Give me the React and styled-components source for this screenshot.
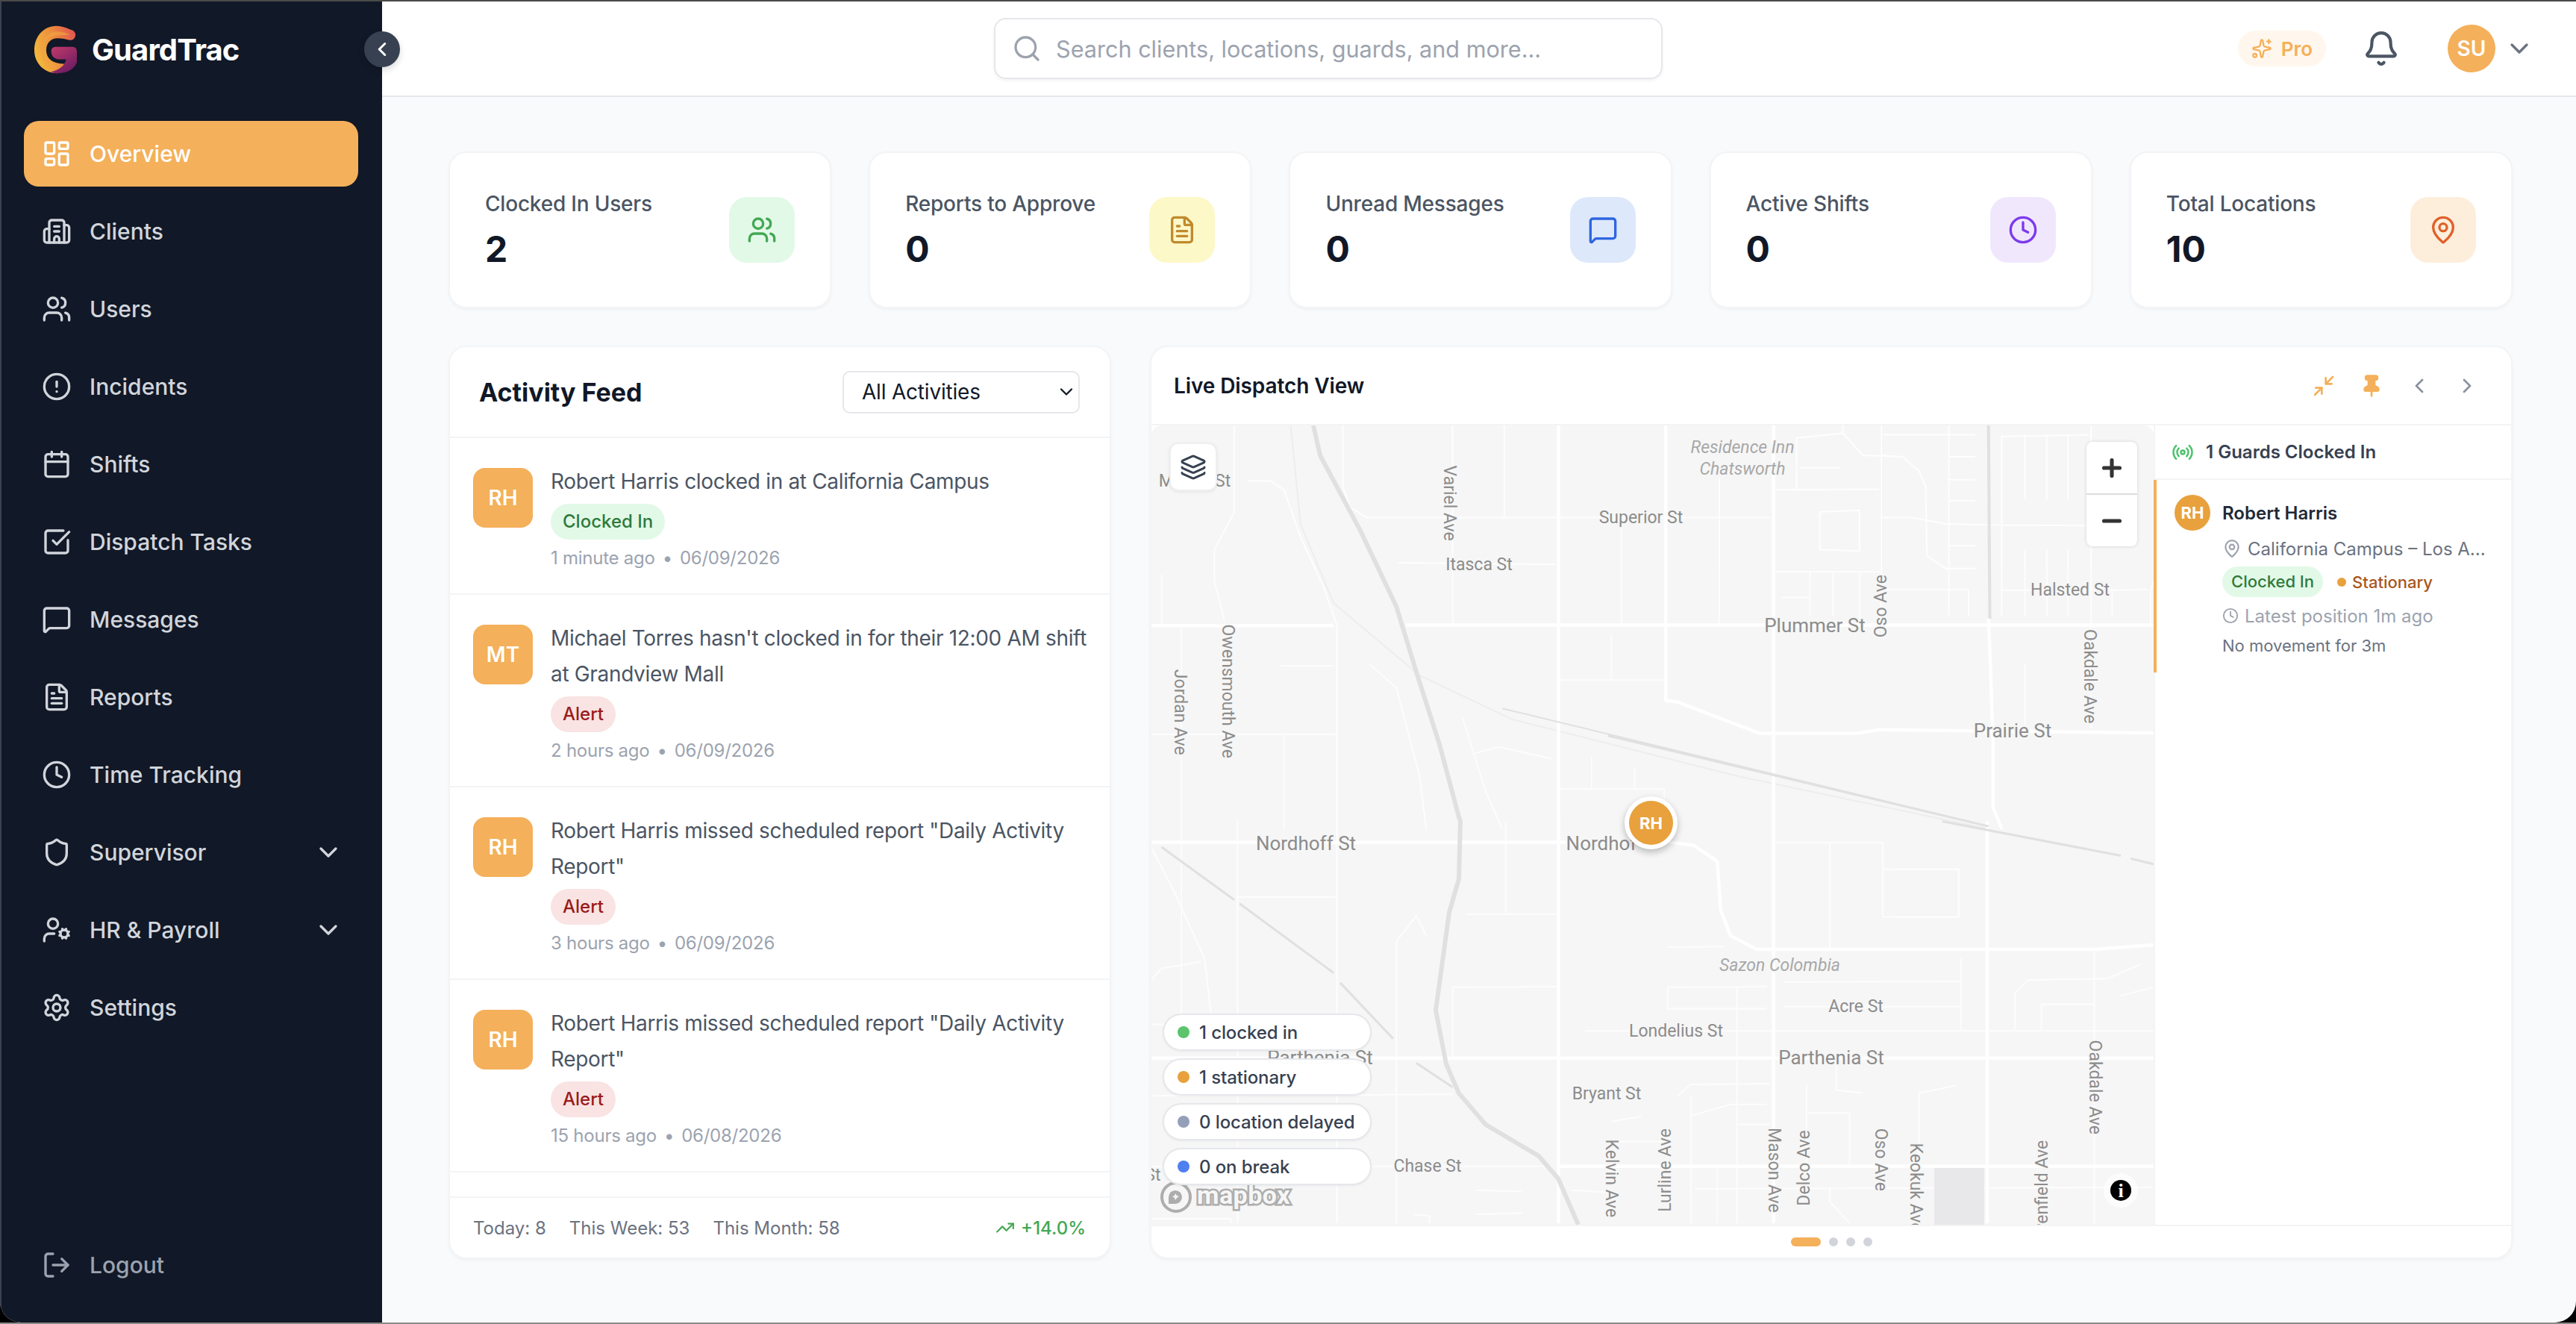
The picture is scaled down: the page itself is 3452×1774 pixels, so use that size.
import React from "react";
import styled, { createGlobalStyle } from "styled-components";
import {
  LayoutDashboard, Building2, Users, CircleAlert, Calendar, SquareCheckBig, MessageSquare,
  FileText, Clock, Shield, UserCog, Settings, LogOut, ChevronDown, ChevronLeft, ChevronRight,
  Search, Sparkles, Bell, Layers, Plus, Minus, Minimize2, Pin, Radio, MapPin, TrendingUp,
} from "lucide-react";

const navItems = [
  { label: "Overview", icon: LayoutDashboard, active: true },
  { label: "Clients", icon: Building2 },
  { label: "Users", icon: Users },
  { label: "Incidents", icon: CircleAlert },
  { label: "Shifts", icon: Calendar },
  { label: "Dispatch Tasks", icon: SquareCheckBig },
  { label: "Messages", icon: MessageSquare },
  { label: "Reports", icon: FileText },
  { label: "Time Tracking", icon: Clock },
  { label: "Supervisor", icon: Shield, more: true },
  { label: "HR & Payroll", icon: UserCog, more: true },
  { label: "Settings", icon: Settings },
];

const stats = [
  { label: "Clocked In Users", value: "2", icon: Users, bg: "#e2f9e8", color: "#43a853" },
  { label: "Reports to Approve", value: "0", icon: FileText, bg: "#fdf8c8", color: "#c08a2e" },
  { label: "Unread Messages", value: "0", icon: MessageSquare, bg: "#dde8fb", color: "#2f66e0" },
  { label: "Active Shifts", value: "0", icon: Clock, bg: "#f0e7fd", color: "#7c3aed" },
  { label: "Total Locations", value: "10", icon: MapPin, bg: "#fdeedb", color: "#e0602a" },
];

const feed = [
  { who: "RH", text: "Robert Harris clocked in at California Campus", tag: "Clocked In", ok: true, time: "1 minute ago", date: "06/09/2026" },
  { who: "MT", text: "Michael Torres hasn't clocked in for their 12:00 AM shift at Grandview Mall", tag: "Alert", time: "2 hours ago", date: "06/09/2026" },
  { who: "RH", text: 'Robert Harris missed scheduled report "Daily Activity Report"', tag: "Alert", time: "3 hours ago", date: "06/09/2026" },
  { who: "RH", text: 'Robert Harris missed scheduled report "Daily Activity Report"', tag: "Alert", time: "15 hours ago", date: "06/08/2026" },
];

const legend = [
  { label: "1 clocked in", color: "#5bc46d" },
  { label: "1 stationary", color: "#e8a13c" },
  { label: "0 location delayed", color: "#94a0b8" },
  { label: "0 on break", color: "#4f7ff0" },
];

// map geometry, read off the two map crops
const upper = (p) => [1530 + p[0] * 0.8865, 450 + p[1] * 0.4209];
const lower = (p) => [1530 + p[0] * 0.8865, 1100 + p[1] * 0.3827];
const pts = (list, fn) => list.map((p) => fn(p).map((n) => n.toFixed(1)).join(",")).join(" ");

const upperMajor = [
  [[12, 922], [290, 922]],
  [[400, 920], [1530, 920]],
  [[630, 285], [630, 1568]],
  [[792, 285], [792, 1160], [810, 1165], [935, 1265], [1080, 1265], [1115, 1253], [1530, 1263]],
  [[955, 285], [955, 1568]],
  [[1280, 900], [1282, 1000], [1287, 1300], [1287, 1500], [1300, 1568]],
];
const upperMinor = [
  [[1118, 285], [1118, 920]],
  [[304, 285], [304, 480], [315, 545], [340, 578], [950, 578]],
  [[140, 285], [140, 560], [110, 680], [110, 780], [125, 905]],
  [[160, 462], [195, 462], [215, 490], [240, 640], [275, 800], [295, 920], [295, 1568]],
  [[12, 1268], [295, 1268]],
  [[630, 1095], [792, 1095]],
  [[388, 722], [625, 727]],
  [[470, 285], [470, 920]],
  [[955, 490], [1115, 488]],
  [[955, 750], [1118, 750]],
  [[1118, 578], [1165, 578], [1215, 598], [1280, 602], [1430, 604]],
  [[1118, 380], [1150, 385], [1175, 430], [1185, 480], [1187, 700], [1215, 740], [1260, 740]],
  [[1300, 890], [1300, 320], [1430, 315]],
  [[1118, 315], [1260, 315]],
  [[1300, 810], [1520, 808]],
  [[1118, 808], [1250, 808], [1250, 890]],
  [[1435, 285], [1435, 1250]],
  [[60, 930], [60, 1568]],
  [[30, 760], [30, 920]],
  [[210, 1050], [290, 1050]],
  [[215, 1268], [215, 1568]],
  [[548, 285], [548, 578]],
  [[725, 578], [725, 920]],
  [[873, 450], [873, 920]],
  [[710, 950], [710, 1095]],
  [[500, 1330], [540, 1308], [620, 1345]],
  [[485, 1215], [520, 1450], [545, 1568]],
  [[345, 1045], [385, 1120], [420, 1400], [430, 1568]],
  [[680, 1340], [680, 1440]],
  [[745, 1375], [745, 1440]],
  [[630, 1442], [790, 1442], [790, 1568]],
  [[1060, 285], [1060, 310], [990, 325], [990, 490]],
  [[1060, 310], [1090, 380], [1150, 385]],
  [[1025, 560], [1085, 555], [1085, 685], [1025, 680], [1025, 560]],
  [[1220, 285], [1220, 890]],
  [[1220, 385], [1260, 385]],
  [[1220, 458], [1260, 458]],
  [[1220, 525], [1260, 525]],
  [[1220, 668], [1260, 668]],
  [[1335, 315], [1335, 520]],
  [[1368, 315], [1368, 520]],
  [[1400, 315], [1400, 520]],
  [[1335, 680], [1335, 890]],
  [[1368, 680], [1368, 890]],
  [[1400, 680], [1400, 890]],
  [[1467, 810], [1467, 890]],
  [[1335, 1045], [1335, 1240]],
  [[1010, 750], [1010, 890]],
  [[1045, 750], [1045, 890]],
  [[1085, 750], [1085, 920]],
  [[968, 832], [1010, 832]],
  [[995, 420], [1055, 420]],
  [[1530, 780], [1525, 810], [1525, 920]],
];
const lowerMajor = [
  [[12, 73], [630, 73], [800, 73], [835, 85], [870, 140], [875, 310], [890, 400], [930, 448], [1440, 448], [1530, 432]],
  [[12, 828], [1530, 828]],
  [[630, 0], [630, 1405]],
  [[955, 0], [955, 1405]],
  [[1278, 0], [1278, 1405]],
  [[632, 1207], [1530, 1207]],
];
const lowerMinor = [
  [[12, 1207], [620, 1207]],
  [[12, 80], [50, 250], [95, 480], [105, 680]],
  [[295, 0], [295, 1405]],
  [[145, 0], [145, 1405]],
  [[60, 0], [60, 680]],
  [[145, 265], [295, 265]],
  [[490, 325], [630, 325]],
  [[470, 830], [470, 580], [630, 578]],
  [[550, 0], [550, 320]],
  [[795, 660], [795, 580], [945, 578]],
  [[795, 655], [945, 655]],
  [[900, 580], [900, 1405]],
  [[970, 562], [1238, 560]],
  [[970, 648], [1238, 648]],
  [[1238, 480], [1238, 735]],
  [[670, 733], [1530, 733]],
  [[1120, 168], [1235, 168], [1235, 335], [1120, 335], [1120, 168]],
  [[1040, 75], [1040, 448]],
  [[1120, 75], [1120, 168]],
  [[958, 75], [1120, 75]],
  [[795, 440], [880, 438]],
  [[1440, 448], [1440, 1405]],
  [[1320, 735], [1320, 600], [1340, 555], [1460, 550], [1510, 500]],
  [[1360, 735], [1360, 640], [1440, 640]],
  [[1480, 610], [1530, 580]],
  [[810, 960], [830, 920], [950, 918]],
  [[830, 1030], [890, 990], [945, 990]],
  [[830, 960], [830, 1405]],
  [[1050, 840], [1050, 940], [1090, 950]],
  [[1175, 1200], [1175, 950], [1230, 925]],
  [[903, 1060], [950, 1060]],
  [[710, 1050], [755, 1032]],
  [[712, 1120], [800, 1120]],
  [[1005, 920], [1005, 1205]],
  [[1005, 1020], [1070, 1020], [1070, 1205]],
  [[650, 1290], [720, 1300]],
  [[835, 1285], [1530, 1280]],
  [[870, 1207], [870, 1405]],
  [[1040, 1280], [1040, 1330], [1070, 1405]],
  [[505, 1290], [575, 1295]],
  [[505, 1375], [575, 1370]],
  [[90, 490], [30, 515], [12, 560]],
  [[385, 1405], [385, 420], [415, 330], [430, 400]],
  [[12, 960], [470, 955]],
  [[12, 710], [60, 710]],
  [[12, 1390], [135, 1390], [135, 1405]],
  [[410, 1375], [435, 1380], [435, 1405]],
];
const highway = [
  [1760, 570], [1769, 610], [1823, 711], [1871, 812], [1898, 900], [1929, 997], [1955, 1094],
  [1957, 1100], [1955, 1177], [1942, 1222], [1924, 1353], [1938, 1425], [1955, 1464], [1991, 1506], [2062, 1548], [2088, 1578], [2115, 1640],
];

const labels = [
  { t: "Residence Inn", x: 2335, y: 599, it: true },
  { t: "Chatsworth", x: 2335, y: 628, it: true },
  { t: "Marilla St", x: 1601, y: 644 },
  { t: "Superior St", x: 2199, y: 693 },
  { t: "Variel Ave", x: 1942, y: 674, r: 90 },
  { t: "Itasca St", x: 1982, y: 756 },
  { t: "Oso Ave", x: 2521, y: 812, r: -90 },
  { t: "Plummer St", x: 2432, y: 838, big: true },
  { t: "Halsted St", x: 2774, y: 790 },
  { t: "Owensmouth Ave", x: 1645, y: 926, r: 90 },
  { t: "Jordan Ave", x: 1581, y: 954, r: 90 },
  { t: "Oakdale Ave", x: 2800, y: 906, r: 90 },
  { t: "Prairie St", x: 2697, y: 979, big: true },
  { t: "Nordhoff St", x: 1750, y: 1129, big: true },
  { t: "Nordhof", x: 2146, y: 1129, big: true },
  { t: "Sazon Colombia", x: 2385, y: 1293, it: true },
  { t: "Acre St", x: 2487, y: 1348 },
  { t: "Londelius St", x: 2246, y: 1381 },
  { t: "Parthenia St", x: 2454, y: 1416, big: true },
  { t: "Parthenia St", x: 1769, y: 1416, big: true },
  { t: "Bryant St", x: 2153, y: 1465 },
  { t: "Chase St", x: 1913, y: 1562 },
  { t: "Chase St", x: 1510, y: 1574 },
  { t: "Oakdale Ave", x: 2807, y: 1456, r: 90 },
  { t: "Kelvin Ave", x: 2159, y: 1578, r: 90 },
  { t: "Lurline Ave", x: 2232, y: 1567, r: -90 },
  { t: "Mason Ave", x: 2377, y: 1567, r: 90 },
  { t: "Delco Ave", x: 2418, y: 1564, r: -90 },
  { t: "Oso Ave", x: 2520, y: 1553, r: 90 },
  { t: "Keokuk Ave", x: 2567, y: 1590, r: 90 },
  { t: "Penfield Ave", x: 2737, y: 1590, r: -90 },
];

function MapDrawing() {
  return (
    <MapSvg viewBox="1543 570 1343 1070" preserveAspectRatio="none">
      <rect x="1541" y="570" width="1345" height="1070" fill="#f6f6f6" />
      <polyline points={pts([[225, 285], [240, 600], [290, 850], [420, 1080], [560, 1220], [900, 1400], [1280, 1568]], upper)} fill="none" stroke="#ededed" strokeWidth="2" />
      <g fill="none" stroke="#ffffff" strokeLinejoin="round">
        <g strokeWidth="2" opacity="0.85">
          {upperMinor.map((r, i) => <polyline key={i} points={pts(r, upper)} />)}
          {lowerMinor.map((r, i) => <polyline key={i} points={pts(r, lower)} />)}
        </g>
        <g strokeWidth="4.5">
          {upperMajor.map((r, i) => <polyline key={i} points={pts(r, upper)} />)}
          {lowerMajor.map((r, i) => <polyline key={i} points={pts(r, lower)} />)}
        </g>
      </g>
      <g fill="none" stroke="#e0e0e0" strokeLinejoin="round">
        <polyline points={highway.map((p) => p.join(",")).join(" ")} strokeWidth="6" />
        <polyline points={pts([[1280, 285], [1282, 900]], upper)} strokeWidth="4" />
        <polyline points={pts([[545, 1185], [1280, 1560]], upper)} strokeWidth="2" />
        <polyline points={pts([[705, 1272], [1280, 1560]], upper)} strokeWidth="3" />
        <polyline points={pts([[1210, 0], [1480, 120]], lower)} strokeWidth="3" />
        <polyline points={pts([[1495, 130], [1530, 150]], lower)} strokeWidth="3" />
        <polyline points={pts([[30, 90], [140, 275]], lower)} strokeWidth="3" />
        <polyline points={pts([[148, 288], [290, 530]], lower)} strokeWidth="3" />
        <polyline points={pts([[300, 565], [380, 760]], lower)} strokeWidth="3" />
        <polyline points={pts([[415, 845], [470, 930]], lower)} strokeWidth="3" />
      </g>
      <rect x="2592" y="1564" width="67" height="76" fill="#e8e8ea" />
      {labels.map((l, i) => (
        <MapLabel
          key={i}
          x={l.x}
          y={l.y}
          $big={l.big}
          $italic={l.it}
          transform={l.r ? `rotate(${l.r} ${l.x} ${l.y})` : undefined}
        >
          {l.t}
        </MapLabel>
      ))}
      <circle cx="1576" cy="1603" r="19" fill="#f6f6f6" stroke="#adadad" strokeWidth="4" />
      <path d="M1566 1612 v-9 a9 9 0 1 1 9 9 z" fill="#adadad" />
      <path d="M1575 1598 l2 3 3 1 -3 2 -2 3 -1 -3 -3 -2 3 -1 z" fill="#f6f6f6" />
      <MapboxMark x="1604" y="1612">mapbox</MapboxMark>
      <circle cx="2842" cy="1594" r="23" fill="#ffffff" opacity="0.7" />
      <circle cx="2842" cy="1594" r="14" fill="#000000" />
      <InfoMark x="2842" y="1595">i</InfoMark>
    </MapSvg>
  );
}

function GuardLogo() {
  return (
    <LogoSvg viewBox="47 43 171 190">
      <defs>
        <linearGradient id="gOuter" x1="0" y1="0.6" x2="1" y2="0.2">
          <stop offset="0" stopColor="#f3b93c" />
          <stop offset="0.55" stopColor="#ec8a3e" />
          <stop offset="1" stopColor="#e2574f" />
        </linearGradient>
        <linearGradient id="gInner" x1="0" y1="0" x2="0.7" y2="1">
          <stop offset="0" stopColor="#c23a6a" />
          <stop offset="1" stopColor="#6d1c63" />
        </linearGradient>
      </defs>
      <path d="M193 58 Q160 43 135 43 C85 43 47 85 47 140 C47 195 90 233 140 233 L170 195 C130 195 95 180 95 140 C95 110 115 92 140 92 C160 92 175 96 190 100 A21 21 0 0 0 193 58 Z" fill="url(#gOuter)" />
      <path d="M72 140 C72 100 100 66 140 66 Q165 66 190 78 Q165 80 140 80 C105 80 84 105 84 140 C84 180 115 205 150 210 C105 212 72 185 72 140 Z" fill="#f0a244" opacity="0.7" />
      <path d="M115 145 Q115 128 132 127 L200 127 Q218 127 218 145 L218 190 Q200 233 140 233 Q122 233 112 228 C150 220 170 200 175 177 L140 177 Q115 170 115 145 Z" fill="url(#gInner)" />
    </LogoSvg>
  );
}

export default function App() {
  return (
    <Frame>
      <GlobalStyle />
      <Shell>
        <Sidebar>
          <Brand>
            <GuardLogo />
            <BrandName>GuardTrac</BrandName>
          </Brand>
          <CollapseButton><ChevronLeft size={30} strokeWidth={2.4} /></CollapseButton>
          <Nav>
            {navItems.map((item) => (
              <NavItem key={item.label} $active={item.active}>
                <item.icon size={40} strokeWidth={2} />
                <NavLabel>{item.label}</NavLabel>
                {item.more && <ChevronDown size={40} strokeWidth={2} />}
              </NavItem>
            ))}
          </Nav>
          <LogoutRow>
            <LogOut size={40} strokeWidth={2} />
            <NavLabel>Logout</NavLabel>
          </LogoutRow>
        </Sidebar>

        <Main>
          <Header>
            <SearchBox>
              <Search size={40} strokeWidth={2} color="#9ca3af" />
              <SearchInput>Search clients, locations, guards, and more...</SearchInput>
            </SearchBox>
            <ProBadge><Sparkles size={28} strokeWidth={2} />Pro</ProBadge>
            <BellButton><Bell size={50} strokeWidth={2} /></BellButton>
            <UserAvatar>SU</UserAvatar>
            <UserChevron><ChevronDown size={40} strokeWidth={2} /></UserChevron>
          </Header>

          <Content>
            <StatRow>
              {stats.map((s) => (
                <StatCard key={s.label}>
                  <div>
                    <StatLabel>{s.label}</StatLabel>
                    <StatValue>{s.value}</StatValue>
                  </div>
                  <StatIcon $bg={s.bg} $color={s.color}><s.icon size={40} strokeWidth={2} /></StatIcon>
                </StatCard>
              ))}
            </StatRow>

            <Panels>
              <FeedCard>
                <FeedHeader>
                  <FeedTitle>Activity Feed</FeedTitle>
                  <FilterSelect>All Activities<ChevronDown size={28} strokeWidth={2} color="#111827" /></FilterSelect>
                </FeedHeader>
                <FeedList>
                  {feed.map((f, i) => (
                    <FeedItem key={i}>
                      <FeedAvatar>{f.who}</FeedAvatar>
                      <FeedBody>
                        <FeedText>{f.text}</FeedText>
                        <FeedTag $ok={f.ok}>{f.tag}</FeedTag>
                        <FeedTime>{f.time}<TimeDot>•</TimeDot>{f.date}</FeedTime>
                      </FeedBody>
                    </FeedItem>
                  ))}
                </FeedList>
                <FeedFooter>
                  <FootStat>Today: 8</FootStat>
                  <FootStat>This Week: 53</FootStat>
                  <FootStat>This Month: 58</FootStat>
                  <Trend><TrendingUp size={26} strokeWidth={2} />+14.0%</Trend>
                </FeedFooter>
              </FeedCard>

              <MapCard>
                <MapHeader>
                  <MapTitle>Live Dispatch View</MapTitle>
                  <MapTools>
                    <ToolIcon $color="#f4b05a"><Minimize2 size={32} strokeWidth={2} /></ToolIcon>
                    <ToolIcon $color="#f4b05a"><Pin size={32} strokeWidth={2} fill="#f4b05a" /></ToolIcon>
                    <ToolIcon $color="#8b93a1"><ChevronLeft size={32} strokeWidth={2} /></ToolIcon>
                    <ToolIcon $color="#8b93a1"><ChevronRight size={32} strokeWidth={2} /></ToolIcon>
                  </MapTools>
                </MapHeader>
                <MapBody>
                  <MapArea>
                    <MapDrawing />
                    <LayerButton><Layers size={36} strokeWidth={2} /></LayerButton>
                    <ZoomControl>
                      <ZoomStep><Plus size={36} strokeWidth={3.4} /></ZoomStep>
                      <ZoomStep><Minus size={36} strokeWidth={3.4} /></ZoomStep>
                    </ZoomControl>
                    <MapMarker>RH</MapMarker>
                    <Legend>
                      {legend.map((l) => (
                        <LegendPill key={l.label}>
                          <LegendDot $color={l.color} />
                          {l.label}
                        </LegendPill>
                      ))}
                    </Legend>
                  </MapArea>
                  <GuardPanel>
                    <GuardHeader>
                      <Radio size={30} strokeWidth={2} color="#4ac26b" />
                      1 Guards Clocked In
                    </GuardHeader>
                    <GuardItem>
                      <GuardAvatar>RH</GuardAvatar>
                      <GuardInfo>
                        <GuardName>Robert Harris</GuardName>
                        <GuardPlace><MapPin size={26} strokeWidth={2} color="#9ca3af" />California Campus – Los A...</GuardPlace>
                        <GuardTags>
                          <GuardBadge>Clocked In</GuardBadge>
                          <StationaryTag>Stationary</StationaryTag>
                        </GuardTags>
                        <GuardLatest><Clock size={22} strokeWidth={2} />Latest position 1m ago</GuardLatest>
                        <GuardNote>No movement for 3m</GuardNote>
                      </GuardInfo>
                    </GuardItem>
                  </GuardPanel>
                </MapBody>
                <Pager>
                  <PagerDot $on />
                  <PagerDot />
                  <PagerDot />
                  <PagerDot />
                </Pager>
              </MapCard>
            </Panels>
          </Content>
        </Main>
      </Shell>
    </Frame>
  );
}

const GlobalStyle = createGlobalStyle`
  * { box-sizing: border-box; }
  body {
    margin: 0;
    font-family: Inter, "Liberation Sans", sans-serif;
    background: #000;
  }
`;

const Frame = styled.div`
  width: 3452px;
  height: 1774px;
  overflow: hidden;
  background: #000;
  border-top: 2px solid #4a4a4a;
  border-bottom: 2px solid #8a8a8a;
`;
const Shell = styled.div`
  display: flex;
  height: 1770px;
  background: #f9fafb;
  border-radius: 0 0 28px 28px;
  overflow: hidden;
`;

const Sidebar = styled.aside`
  position: relative;
  z-index: 2;
  flex: 0 0 512px;
  display: flex;
  flex-direction: column;
  background: #111827;
  border-left: 2px solid #3d4350;
  padding-bottom: 33px;
`;
const Brand = styled.div`
  display: flex;
  align-items: center;
  gap: 20px;
  height: 65px;
  margin: 32px 0 63px 44px;
`;
const LogoSvg = styled.svg`
  width: 57px;
  height: 65px;
`;
const BrandName = styled.span`
  font-size: 40px;
  font-weight: 700;
  color: #fff;
  letter-spacing: -0.9px;
`;
const CollapseButton = styled.div`
  position: absolute;
  top: 40px;
  right: -24px;
  width: 48px;
  height: 48px;
  border-radius: 50%;
  display: flex;
  align-items: center;
  justify-content: center;
  background: #374151;
  color: #fff;
  box-shadow: 0 4px 10px rgba(0, 0, 0, 0.15);
`;
const Nav = styled.nav`
  display: flex;
  flex-direction: column;
  gap: 16px;
  padding: 0 32px 0 30px;
`;
const NavItem = styled.div`
  display: flex;
  align-items: center;
  gap: 24px;
  height: 88px;
  padding: 0 20px 0 24px;
  border-radius: 20px;
  font-size: 30px;
  font-weight: 500;
  background: ${(p) => (p.$active ? "#f4b05a" : "transparent")};
  color: ${(p) => (p.$active ? "#fff" : "#d1d5db")};
`;
const NavLabel = styled.span`
  flex: 1;
`;
const LogoutRow = styled(NavItem)`
  margin: auto 32px 0 30px;
  color: #9ca3af;
`;

const Main = styled.main`
  flex: 1;
  min-width: 0;
  display: flex;
  flex-direction: column;
`;
const Header = styled.header`
  flex: 0 0 128px;
  display: flex;
  align-items: center;
  padding: 0 56px 0 820px;
  background: #fff;
  border-bottom: 2px solid #e5e7eb;
`;
const SearchBox = styled.div`
  display: flex;
  align-items: center;
  gap: 19px;
  width: 896px;
  height: 82px;
  padding: 0 22px;
  background: #fff;
  border: 2px solid #e5e7eb;
  border-radius: 16px;
  box-shadow: 0 2px 4px rgba(0, 0, 0, 0.05);
`;
const SearchInput = styled.span`
  font-size: 30.6px;
  color: #9ca3af;
`;
const ProBadge = styled.div`
  display: flex;
  align-items: center;
  justify-content: center;
  gap: 12px;
  width: 118px;
  height: 48px;
  margin-left: auto;
  border-radius: 24px;
  background: #fff7ed;
  color: #f4b05a;
  font-size: 26px;
  font-weight: 600;
`;
const BellButton = styled.div`
  display: flex;
  margin-left: 49px;
  color: #4b5563;
`;
const UserAvatar = styled.div`
  display: flex;
  align-items: center;
  justify-content: center;
  width: 64px;
  height: 64px;
  margin-left: 64px;
  border-radius: 50%;
  background: #f4b05a;
  color: #fff;
  font-size: 28px;
  font-weight: 600;
`;
const UserChevron = styled.div`
  display: flex;
  margin-left: 12px;
  color: #6b7280;
`;

const Content = styled.div`
  flex: 1;
  min-height: 0;
  display: flex;
  flex-direction: column;
  gap: 50px;
  padding: 73px 85px 85px 89px;
`;
const StatRow = styled.section`
  display: grid;
  grid-template-columns: repeat(5, 1fr);
  gap: 50px;
`;
const StatCard = styled.div`
  display: flex;
  align-items: center;
  justify-content: space-between;
  height: 210px;
  padding: 0 47px 2px;
  background: #fff;
  border: 2px solid #f3f4f6;
  border-radius: 24px;
  box-shadow: 0 2px 4px rgba(0, 0, 0, 0.04);
`;
const StatLabel = styled.div`
  font-size: 28px;
  font-weight: 500;
  line-height: 40px;
  letter-spacing: -0.2px;
  color: #4b5563;
`;
const StatValue = styled.div`
  margin-top: 13px;
  font-size: 48px;
  font-weight: 700;
  line-height: 56px;
  color: #111827;
`;
const StatIcon = styled.div`
  display: flex;
  align-items: center;
  justify-content: center;
  width: 88px;
  height: 88px;
  margin-top: 2px;
  border-radius: 24px;
  background: ${(p) => p.$bg};
  color: ${(p) => p.$color};
`;

const Panels = styled.section`
  flex: 1;
  min-height: 0;
  display: flex;
  gap: 52px;
`;
const Card = styled.div`
  display: flex;
  flex-direction: column;
  overflow: hidden;
  background: #fff;
  border: 2px solid #f3f4f6;
  border-radius: 24px;
  box-shadow: 0 2px 4px rgba(0, 0, 0, 0.04);
`;
const FeedCard = styled(Card)`
  flex: 0 0 888px;
`;
const FeedHeader = styled.div`
  flex: 0 0 122px;
  display: flex;
  align-items: center;
  justify-content: space-between;
  padding: 0 40px 0 39px;
  border-bottom: 2px solid #f3f4f6;
`;
const FeedTitle = styled.h2`
  margin: 0;
  font-size: 34px;
  font-weight: 700;
  color: #111827;
`;
const FilterSelect = styled.div`
  display: flex;
  align-items: center;
  justify-content: space-between;
  width: 318px;
  height: 57px;
  padding: 0 2px 0 24px;
  background: #fff;
  border: 2px solid #e5e7eb;
  border-radius: 10px;
  font-size: 28px;
  letter-spacing: -0.2px;
  color: #111827;
`;
const FeedList = styled.div`
  flex: 1;
  min-height: 0;
  overflow: hidden;
`;
const FeedItem = styled.div`
  display: flex;
  align-items: flex-start;
  gap: 24px;
  padding: 34px 30px 30px 31px;
  border-bottom: 2px solid #f3f4f6;
`;
const FeedAvatar = styled.div`
  flex: 0 0 80px;
  height: 80px;
  margin-top: 6px;
  display: flex;
  align-items: center;
  justify-content: center;
  border-radius: 16px;
  background: #f4b05a;
  color: #fff;
  font-size: 28px;
  font-weight: 600;
`;
const FeedBody = styled.div`
  flex: 1;
  min-width: 0;
`;
const FeedText = styled.div`
  font-size: 28px;
  line-height: 48px;
  letter-spacing: -0.33px;
  color: #4b5563;
`;
const FeedTag = styled.span`
  display: inline-block;
  margin-top: 6px;
  height: 48px;
  padding: 0 16px;
  border-radius: 24px;
  font-size: 24px;
  font-weight: 500;
  line-height: 48px;
  vertical-align: top;
  background: ${(p) => (p.$ok ? "#e2f9e8" : "#f9e3e3")};
  color: ${(p) => (p.$ok ? "#2f7a3b" : "#991b1b")};
`;
const FeedTime = styled.div`
  margin-top: 8px;
  font-size: 24px;
  line-height: 34px;
  letter-spacing: -0.25px;
  color: #9ca3af;
`;
const TimeDot = styled.span`
  margin: 0 10px;
`;
const FeedFooter = styled.div`
  flex: 0 0 82px;
  display: flex;
  align-items: center;
  gap: 31px;
  padding: 0 32px 0 31px;
  border-top: 2px solid #f3f4f6;
  font-size: 24px;
  color: #6b7280;
`;
const FootStat = styled.span``;
const Trend = styled.span`
  display: flex;
  align-items: center;
  gap: 8px;
  margin-left: auto;
  font-weight: 500;
  color: #43a853;
`;

const MapCard = styled(Card)`
  flex: 1;
  min-width: 0;
`;
const MapHeader = styled.div`
  flex: 0 0 105px;
  display: flex;
  align-items: center;
  justify-content: space-between;
  padding: 0 43px 0 30px;
  border-bottom: 2px solid #f3f4f6;
`;
const MapTitle = styled.h3`
  margin: 0;
  font-size: 28px;
  font-weight: 600;
  letter-spacing: -0.1px;
  color: #111827;
`;
const MapTools = styled.div`
  display: flex;
  gap: 32px;
`;
const ToolIcon = styled.span`
  display: flex;
  color: ${(p) => p.$color};
`;
const MapBody = styled.div`
  flex: 1;
  min-height: 0;
  display: flex;
`;
const MapArea = styled.div`
  position: relative;
  flex: 0 0 1343px;
  overflow: hidden;
  border-radius: 14px 14px 0 0;
`;
const MapSvg = styled.svg`
  display: block;
  width: 100%;
  height: 100%;
`;
const MapLabel = styled.text`
  font-family: Roboto, "Liberation Sans", sans-serif;
  font-size: ${(p) => (p.$big ? "26px" : "23px")};
  font-style: ${(p) => (p.$italic ? "italic" : "normal")};
  fill: ${(p) => (p.$italic ? "#a8a8a8" : "#8c8c8c")};
  text-anchor: middle;
  dominant-baseline: central;
  paint-order: stroke;
  stroke: #f6f6f6;
  stroke-width: 3px;
`;
const MapboxMark = styled.text`
  font-family: Roboto, "Liberation Sans", sans-serif;
  font-size: 34px;
  font-weight: 700;
  letter-spacing: 0.5px;
  fill: #f6f6f6;
  paint-order: stroke;
  stroke: #adadad;
  stroke-width: 5px;
`;
const InfoMark = styled.text`
  font-family: "Liberation Serif", serif;
  font-size: 26px;
  font-weight: 700;
  fill: #fff;
  text-anchor: middle;
  dominant-baseline: central;
`;
const LayerButton = styled.div`
  position: absolute;
  top: 23px;
  left: 24px;
  width: 64px;
  height: 65px;
  display: flex;
  align-items: center;
  justify-content: center;
  background: #fff;
  border: 2px solid #eeeff1;
  border-radius: 12px;
  color: #374151;
  box-shadow: 0 1px 4px rgba(0, 0, 0, 0.08);
`;
const ZoomControl = styled.div`
  position: absolute;
  top: 22px;
  right: 22px;
  width: 68px;
  height: 140px;
  display: flex;
  flex-direction: column;
  border-radius: 8px;
  background: #fff;
  overflow: hidden;
  box-shadow: 0 0 4px rgba(0, 0, 0, 0.15);
`;
const ZoomStep = styled.div`
  flex: 1;
  display: flex;
  align-items: center;
  justify-content: center;
  color: #333;
  & + & {
    border-top: 2px solid #ddd;
  }
`;
const MapMarker = styled.div`
  position: absolute;
  left: 634px;
  top: 497px;
  width: 71px;
  height: 71px;
  display: flex;
  align-items: center;
  justify-content: center;
  border-radius: 50%;
  background: #e8a13c;
  border: 6px solid #fff;
  color: #fff;
  font-size: 22px;
  font-weight: 700;
  box-shadow: 0 4px 10px rgba(0, 0, 0, 0.25);
`;
const Legend = styled.div`
  position: absolute;
  left: 15px;
  top: 788px;
  display: flex;
  flex-direction: column;
  gap: 10px;
`;
const LegendPill = styled.div`
  display: flex;
  align-items: center;
  gap: 13px;
  width: 280px;
  height: 50px;
  padding: 0 18px;
  background: rgba(255, 255, 255, 0.96);
  border: 2px solid #e5e7eb;
  border-radius: 25px;
  font-size: 24px;
  font-weight: 500;
  letter-spacing: -0.1px;
  white-space: nowrap;
  color: #374151;
  box-shadow: 0 1px 3px rgba(0, 0, 0, 0.06);
`;
const LegendDot = styled.span`
  flex: 0 0 16px;
  height: 16px;
  border-radius: 50%;
  background: ${(p) => p.$color};
`;
const GuardPanel = styled.div`
  flex: 1;
  min-width: 0;
  border-left: 2px solid #f3f4f6;
`;
const GuardHeader = styled.div`
  height: 73px;
  display: flex;
  align-items: center;
  gap: 16px;
  padding-left: 22px;
  border-bottom: 2px solid #f3f4f6;
  font-size: 24px;
  font-weight: 600;
  color: #374151;
`;
const GuardItem = styled.div`
  display: flex;
  gap: 16px;
  height: 258px;
  margin-left: -2px;
  padding: 20px 0 0 24px;
  border-left: 4px solid #f4b05a;
`;
const GuardAvatar = styled.div`
  flex: 0 0 48px;
  height: 48px;
  display: flex;
  align-items: center;
  justify-content: center;
  border-radius: 50%;
  background: #e8a13c;
  color: #fff;
  font-size: 22px;
  font-weight: 700;
`;
const GuardInfo = styled.div`
  flex: 1;
  min-width: 0;
`;
const GuardName = styled.div`
  height: 50px;
  line-height: 50px;
  font-size: 24px;
  font-weight: 600;
  color: #1f2937;
`;
const GuardPlace = styled.div`
  display: flex;
  align-items: center;
  gap: 8px;
  height: 38px;
  margin-top: 3px;
  font-size: 24px;
  color: #6b7280;
  white-space: nowrap;
`;
const GuardTags = styled.div`
  display: flex;
  align-items: center;
  gap: 19px;
  margin-top: 5px;
`;
const GuardBadge = styled.span`
  height: 41px;
  padding: 0 12px;
  border-radius: 21px;
  background: #e2f9e8;
  color: #2f7a3b;
  font-size: 22px;
  font-weight: 500;
  line-height: 41px;
`;
const StationaryTag = styled.span`
  display: flex;
  align-items: center;
  gap: 8px;
  color: #a8561b;
  font-size: 22px;
  font-weight: 500;
  &::before {
    content: "";
    width: 12px;
    height: 12px;
    border-radius: 50%;
    background: #e8a13c;
  }
`;
const GuardLatest = styled.div`
  display: flex;
  align-items: center;
  gap: 8px;
  height: 32px;
  margin-top: 9px;
  font-size: 24px;
  color: #9ca3af;
`;
const GuardNote = styled.div`
  height: 32px;
  margin-top: 8px;
  line-height: 32px;
  font-size: 22px;
  color: #6b7280;
`;
const Pager = styled.div`
  flex: 0 0 44px;
  display: flex;
  align-items: center;
  justify-content: center;
  gap: 11px;
  border-top: 2px solid #f3f4f6;
`;
const PagerDot = styled.span`
  width: ${(p) => (p.$on ? "40px" : "12px")};
  height: 12px;
  border-radius: 6px;
  background: ${(p) => (p.$on ? "#f4b05a" : "#d1d5db")};
`;
